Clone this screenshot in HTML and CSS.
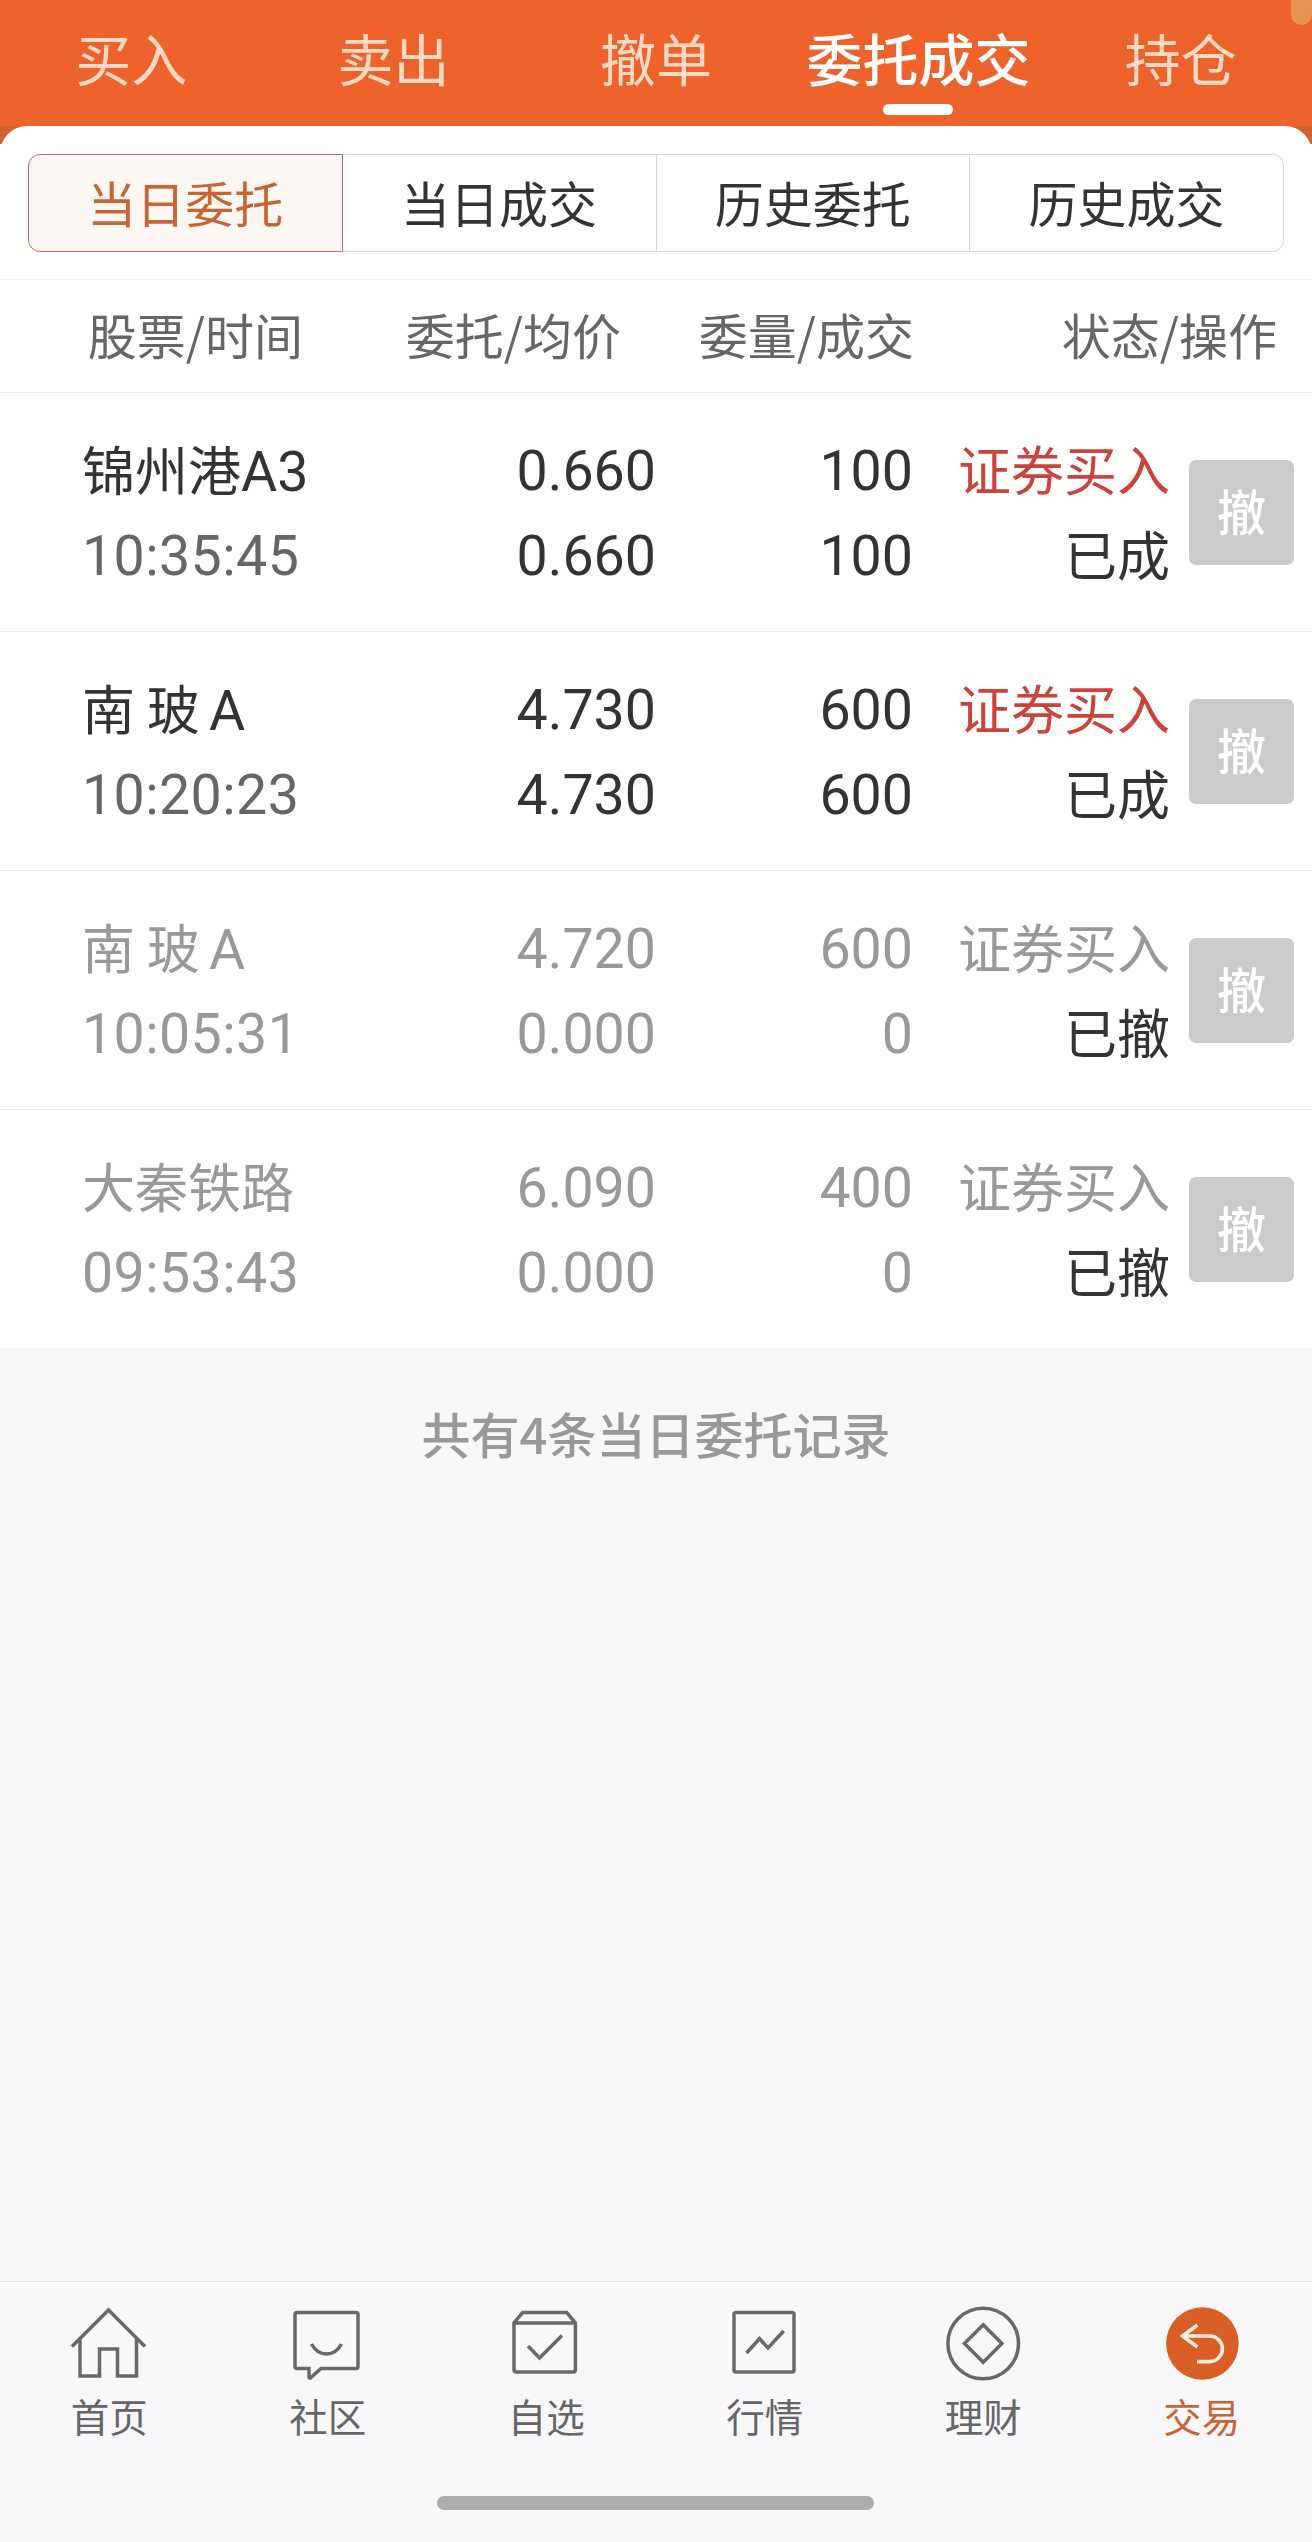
FILE: index.html
```html
<!DOCTYPE html>
<html lang="zh-CN">
<head>
    <meta charset="UTF-8">
    <meta name="viewport" content="width=device-width, initial-scale=1.0">
    <title>委托成交</title>
    <link rel="stylesheet" href="styles.css">
</head>
<body>
    <header class="top-nav">
        <a class="top-tab">买入</a>
        <a class="top-tab">卖出</a>
        <a class="top-tab">撤单</a>
        <a class="top-tab active">委托成交</a>
        <a class="top-tab">持仓</a>
        <span class="edge-handle"></span>
    </header>

    <main class="content">
        <div class="panel">
            <div class="segment">
                <button class="active">当日委托</button>
                <button>当日成交</button>
                <button>历史委托</button>
                <button>历史成交</button>
            </div>
        </div>

        <div class="table-head">
            <span class="col-stock">股票/时间</span>
            <span class="col-price">委托/均价</span>
            <span class="col-amount">委量/成交</span>
            <span class="col-action">状态/操作</span>
        </div>

        <div class="order">
            <div class="stock"><p>锦州港<span class="num">A3</span></p><p class="num time">10:35:45</p></div>
            <div class="price num"><p>0.660</p><p>0.660</p></div>
            <div class="amount num"><p>100</p><p>100</p></div>
            <div class="status"><p class="buy">证券买入</p><p>已成</p></div>
            <button class="cancel">撤</button>
        </div>
        <div class="order">
            <div class="stock"><p>南 玻<span class="num share">A</span></p><p class="num time">10:20:23</p></div>
            <div class="price num"><p>4.730</p><p>4.730</p></div>
            <div class="amount num"><p>600</p><p>600</p></div>
            <div class="status"><p class="buy">证券买入</p><p>已成</p></div>
            <button class="cancel">撤</button>
        </div>
        <div class="order cancelled">
            <div class="stock"><p>南 玻<span class="num share">A</span></p><p class="num time">10:05:31</p></div>
            <div class="price num"><p>4.720</p><p>0.000</p></div>
            <div class="amount num"><p>600</p><p>0</p></div>
            <div class="status"><p class="buy">证券买入</p><p>已撤</p></div>
            <button class="cancel">撤</button>
        </div>
        <div class="order cancelled">
            <div class="stock"><p>大秦铁路</p><p class="num time">09:53:43</p></div>
            <div class="price num"><p>6.090</p><p>0.000</p></div>
            <div class="amount num"><p>400</p><p>0</p></div>
            <div class="status"><p class="buy">证券买入</p><p>已撤</p></div>
            <button class="cancel">撤</button>
        </div>
    </main>

    <p class="summary">共有4条当日委托记录</p>

    <footer class="bottom">
        <nav class="bottom-nav">
            <a class="nav-item">
                <svg viewBox="0 0 80 80"><path d="M3 42.5 L39.5 6 L76 42.5 M11 35 V72 H30.5 V45 H48.5 V72 H67.5 V35"/></svg>
                <span>首页</span>
            </a>
            <a class="nav-item">
                <svg viewBox="0 0 80 80"><path d="M9 8.5 H68 Q70 8.5 70 10.5 V62.5 Q70 64.5 68 64.5 H33 L23 73.5 Q21 75 21 72.5 V64.5 H9 Q7 64.5 7 62.5 V10.5 Q7 8.5 9 8.5 Z M23.5 40 Q29 50 38.5 50 Q48 50 53.5 40"/></svg>
                <span>社区</span>
            </a>
            <a class="nav-item">
                <svg viewBox="0 0 80 80"><path d="M16.7 8.5 H60.6 L69.4 19 V65.5 Q69.4 68 67 68 H10.5 Q8 68 8 65.5 V19 Z M8 19 H69.4 M22 42 L33.5 54 L56 31.5"/></svg>
                <span>自选</span>
            </a>
            <a class="nav-item">
                <svg viewBox="0 0 80 80"><rect x="9" y="8.5" width="60" height="59.5" rx="2"/><path d="M21.5 49 L34.5 34.7 L43 44 L58.7 27"/></svg>
                <span>行情</span>
            </a>
            <a class="nav-item">
                <svg viewBox="0 0 80 80"><circle cx="40.2" cy="39.5" r="35.3"/><path d="M40.2 20.8 L58.9 39.5 L40.2 58.2 L21.5 39.5 Z"/></svg>
                <span>理财</span>
            </a>
            <a class="nav-item active">
                <svg viewBox="0 0 80 80"><circle class="disc" cx="40.4" cy="39.5" r="36.3"/><path class="arrow" d="M35.4 21 L20.6 32 L35.4 43 M20.6 32 H47.6 A12.8 12.8 0 0 1 47.6 57.6 H35"/></svg>
                <span>交易</span>
            </a>
        </nav>
        <div class="home-bar"></div>
    </footer>
</body>
</html>
```
FILE: styles.css
```css
* {
    box-sizing: border-box;
}

body {
    margin: 0;
    height: 2542px;
    display: flex;
    flex-direction: column;
    overflow: hidden;
    background: #f7f8fa;
    color: #333;
    font-family: "Noto Sans CJK SC", sans-serif;
}

p {
    margin: 0;
}

button {
    margin: 0;
    padding: 0;
    font-family: inherit;
}

/* top tabs */
.top-nav {
    position: relative;
    display: flex;
    height: 126px;
    background: #ed632b;
}

.top-tab {
    position: relative;
    flex: 1;
    text-align: center;
    font-size: 56px;
    line-height: 114px;
    white-space: nowrap;
    color: #ffd9c4;
}

.top-tab.active {
    color: #fff;
    font-weight: 500;
}

.top-tab.active::after {
    content: "";
    position: absolute;
    left: 50%;
    bottom: 11px;
    width: 70px;
    height: 11px;
    margin-left: -35px;
    border-radius: 6px;
    background: #fff;
}

.edge-handle {
    position: absolute;
    top: 0;
    right: 0;
    width: 21px;
    height: 25px;
    border-radius: 0 0 11px 11px;
    background: #e59456;
}

.content {
    background: linear-gradient(#d65f2b 18px, #fff 18px);
}

.panel {
    height: 154px;
    padding: 28px 28px 0;
    border-bottom: 1px solid #f6f6f6;
    border-radius: 27px 27px 0 0;
    background: #fff;
}

.segment {
    display: flex;
    height: 98px;
}

.segment button {
    flex: 1;
    padding-bottom: 3px;
    border: 1px solid #d8d8d8;
    border-left-width: 0;
    background: #fff;
    color: #333;
    font-size: 49px;
    line-height: 93px;
}

.segment button:first-child {
    border-radius: 12px 0 0 12px;
}

.segment button:last-child {
    border-radius: 0 12px 12px 0;
}

.segment button.active {
    border: 1px solid #b8714a;
    background: #fdf7f3;
    color: #cb6434;
}

/* order table */
.table-head {
    display: flex;
    height: 113px;
    padding-right: 35px;
    border-bottom: 1px solid #ececec;
    background: #fff;
    color: #666;
    font-size: 49px;
    line-height: 108px;
    text-align: right;
    white-space: nowrap;
}

.col-stock {
    width: 303px;
}

.col-price {
    width: 318px;
}

.col-amount {
    width: 293px;
}

.col-action {
    flex: 1;
}

.order {
    display: flex;
    align-items: center;
    height: 239px;
    padding: 0 18px 3px 82px;
    border-bottom: 1px solid #ececec;
    background: #fff;
    font-size: 53px;
    line-height: 85px;
    text-align: right;
    white-space: nowrap;
}

.order p {
    height: 85px;
}

.order:last-child {
    height: 238px;
    border-bottom: none;
}

.num {
    font-family: Roboto, "Noto Sans CJK SC", sans-serif;
    font-size: 55.5px;
}

.num p,
p.num {
    padding-top: 3px;
}

.share {
    margin-left: 9px;
}

.stock {
    width: 281px;
    text-align: left;
}

.stock .time {
    color: #666;
    letter-spacing: 0.4px;
}

.price {
    width: 293px;
}

.amount {
    width: 257px;
}

.status {
    width: 257px;
}

.buy {
    color: #cb4339;
}

.cancel {
    width: 105px;
    height: 105px;
    margin: 3px 0 0 auto;
    padding-bottom: 5px;
    border: none;
    border-radius: 7px;
    background: #cbcbcb;
    color: #fff;
    font-size: 49px;
    font-weight: 500;
    line-height: 100px;
}

.cancelled,
.cancelled .time,
.cancelled .buy {
    color: #999;
}

.cancelled .status {
    color: #333;
}

.summary {
    padding-top: 49px;
    color: #999;
    font-size: 49px;
    font-weight: 500;
    line-height: 72px;
    text-align: center;
}

/* bottom bar */
.bottom {
    height: 261px;
    margin-top: auto;
    border-top: 1px solid #e4e4e6;
    background: #f8f8fb;
}

.bottom-nav {
    display: flex;
    height: 214px;
    padding: 22px 1px 0 0;
}

.nav-item {
    flex: 1;
    display: flex;
    flex-direction: column;
    align-items: center;
    color: #666;
    font-size: 38.5px;
    line-height: 62px;
}

.nav-item.active {
    color: #cb6434;
}

.nav-item svg {
    width: 80px;
    height: 80px;
    fill: none;
    stroke: #696969;
    stroke-width: 3.5;
}

.nav-item .disc {
    fill: #d95f27;
    stroke: none;
}

.nav-item .arrow {
    stroke: #fdeee4;
    stroke-width: 3.6;
}

.home-bar {
    width: 437px;
    height: 14px;
    margin-left: 437px;
    border-radius: 7px;
    background: #acacac;
}
```
